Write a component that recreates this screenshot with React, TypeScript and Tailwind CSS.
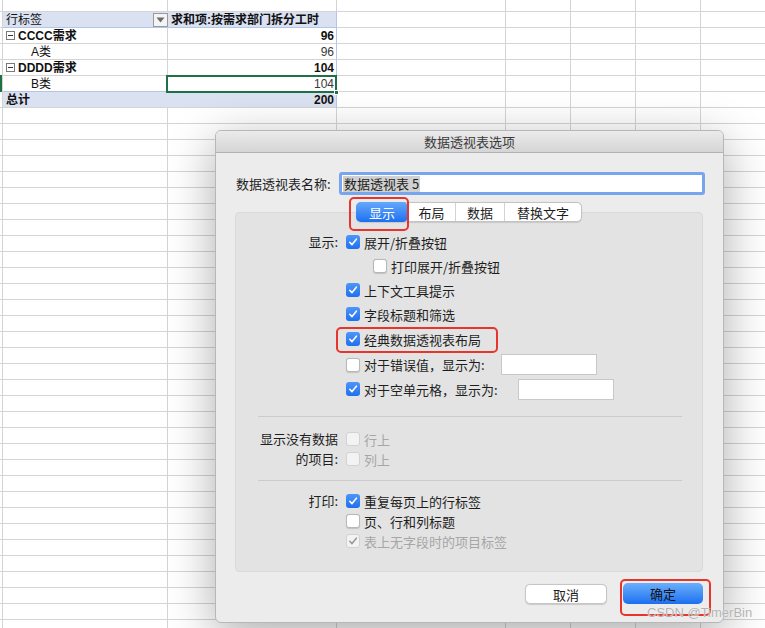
import React from 'react';

const colW = ['w-[3px]', 'w-[165px]', 'w-[169px]', 'w-[169px]', 'w-[65px]', 'w-[65px]', 'w-[65px]', 'w-[65px]'];

function EmptyCells({ from }: { from: number }) {
  return (
    <>
      {colW.slice(from).map((w, i) => (
        <div key={i} className={`${w} shrink-0 border-r border-b border-[#d4d4d4]`} />
      ))}
    </>
  );
}

function EmptyRow({ h = 'h-[16px]' }: { h?: string }) {
  return (
    <div className={`flex shrink-0 ${h}`}>
      <EmptyCells from={0} />
    </div>
  );
}

function Collapse() {
  return (
    <span className="w-[9px] h-[9px] border border-[#7a7a7a] bg-white flex items-center justify-center shrink-0">
      <span className="w-[5px] h-px bg-[#333]" />
    </span>
  );
}

function PivotRow({
  label,
  value,
  bold,
  indent,
  collapse,
  selected,
  lastBlue,
}: {
  label: string;
  value: string;
  bold?: boolean;
  indent?: boolean;
  collapse?: boolean;
  selected?: boolean;
  lastBlue?: boolean;
}) {
  const bb = lastBlue ? 'border-b-[#b4c6e7]' : 'border-b-[#d4d4d4]';
  return (
    <div className="flex shrink-0 h-[16px]">
      <div className={`w-[3px] shrink-0 border-r border-b border-[#d4d4d4] relative`}>
        {selected && <div className="absolute left-0 top-[-1px] w-[2px] h-[17px] bg-[#1e7145]" />}
      </div>
      <div
        className={`w-[165px] shrink-0 border-r border-b border-r-[#d4d4d4] ${bb} flex items-center text-[12px] leading-none text-[#111] ${
          bold ? 'font-bold' : ''
        } ${indent ? 'pl-[28px]' : 'pl-[3px]'}`}
      >
        {collapse && <Collapse />}
        <span className={collapse ? 'ml-[3px]' : ''}>{label}</span>
      </div>
      <div
        className={`w-[169px] shrink-0 border-r border-b border-r-[#b4c6e7] ${bb} flex items-center justify-end pr-[2px] text-[12px] leading-none relative ${
          bold ? 'font-bold text-[#111]' : 'text-[#3a3a3a]'
        }`}
      >
        {value}
        {selected && (
          <div className="absolute left-[-2px] top-[-1px] w-[171px] h-[18px] border-2 border-[#1e7145]">
            <div className="absolute right-[-4px] bottom-[-4px] w-[5px] h-[5px] bg-[#1e7145] border border-white" />
          </div>
        )}
      </div>
      <EmptyCells from={3} />
    </div>
  );
}

function Check({ color = 'white' }: { color?: string }) {
  return (
    <svg width="10" height="10" viewBox="0 0 10 10" fill="none">
      <path d="M1.8 5.3 L4 7.6 L8.4 2.2" stroke={color} strokeWidth="1.6" strokeLinecap="round" strokeLinejoin="round" />
    </svg>
  );
}

function Box({ state }: { state: 'on' | 'off' | 'disOff' | 'disOn' }) {
  if (state === 'on')
    return (
      <span className="w-[14px] h-[14px] shrink-0 rounded-[3px] bg-gradient-to-b from-[#4d95f8] to-[#1f70ef] flex items-center justify-center">
        <Check />
      </span>
    );
  if (state === 'off')
    return <span className="w-[14px] h-[14px] shrink-0 rounded-[3px] bg-white border border-[#b8b8b8] shadow-[0_0.5px_1px_rgba(0,0,0,0.15)]" />;
  if (state === 'disOn')
    return (
      <span className="w-[14px] h-[14px] shrink-0 rounded-[3px] bg-[#f3f3f3] border border-[#d2d2d2] flex items-center justify-center">
        <Check color="#9b9b9b" />
      </span>
    );
  return <span className="w-[14px] h-[14px] shrink-0 rounded-[3px] bg-[#f3f3f3] border border-[#d2d2d2]" />;
}

function CbRow({
  state,
  text,
  h = 'h-[24px]',
  indent,
  disabled,
  children,
}: {
  state: 'on' | 'off' | 'disOff' | 'disOn';
  text: string;
  h?: string;
  indent?: boolean;
  disabled?: boolean;
  children?: React.ReactNode;
}) {
  return (
    <div className={`flex items-center ${h} relative ${indent ? 'pl-[27px]' : ''}`}>
      <Box state={state} />
      <span className={`ml-[4px] text-[13px] leading-none whitespace-nowrap ${disabled ? 'text-[#a6a6a6]' : 'text-[#1e1e1e]'}`}>{text}</span>
      {children}
    </div>
  );
}

const redBox = 'absolute border-2 border-[#e8352c] rounded-[5px] pointer-events-none';

export default function App() {
  const filler = Array.from({ length: 34 });
  return (
    <div className="relative w-[765px] h-[628px] overflow-hidden bg-white font-['Liberation_Sans','Noto_Sans_CJK_SC',sans-serif]">
      {/* Spreadsheet grid */}
      <div className="flex flex-col">
        <EmptyRow h="h-[12px]" />
        {/* header row */}
        <div className="flex shrink-0 h-[16px]">
          <div className="w-[3px] shrink-0 border-r border-b border-[#d4d4d4]" />
          <div className="w-[165px] shrink-0 border-r border-b border-r-[#dae1f1] border-b-[#b4c6e7] bg-[#dae1f1] flex items-center justify-between pl-[3px] text-[12px] leading-none text-[#111]">
            <span>行标签</span>
            <span className="w-[15px] h-[14px] border border-[#9a9a9a] bg-[#f4f4f4] flex items-center justify-center mr-[-1px]">
              <svg width="9" height="6" viewBox="0 0 9 6">
                <path d="M0.5 0.5 H8.5 L4.5 5.5 Z" fill="#6b6b6b" />
              </svg>
            </span>
          </div>
          <div className="w-[169px] shrink-0 border-r border-b border-r-[#b4c6e7] border-b-[#b4c6e7] bg-[#dae1f1] flex items-center pl-[3px] text-[12px] leading-none font-bold text-[#111]">
            求和项:按需求部门拆分工时
          </div>
          <EmptyCells from={3} />
        </div>
        <PivotRow label="CCCC需求" value="96" bold collapse />
        <PivotRow label="A类" value="96" indent />
        <PivotRow label="DDDD需求" value="104" bold collapse />
        <PivotRow label="B类" value="104" indent selected lastBlue />
        {/* total row */}
        <div className="flex shrink-0 h-[16px]">
          <div className="w-[3px] shrink-0 border-r border-b border-[#d4d4d4]" />
          <div className="w-[165px] shrink-0 border-r border-b border-r-[#dae1f1] border-b-[#d4d4d4] bg-[#dae1f1] flex items-center pl-[3px] text-[12px] leading-none font-bold text-[#111]">
            总计
          </div>
          <div className="w-[169px] shrink-0 border-r border-b border-r-[#b4c6e7] border-b-[#d4d4d4] bg-[#dae1f1] flex items-center justify-end pr-[2px] text-[12px] leading-none font-bold text-[#111]">
            200
          </div>
          <EmptyCells from={3} />
        </div>
        {filler.map((_, i) => (
          <EmptyRow key={i} />
        ))}
      </div>

      {/* Dialog window */}
      <div className="absolute left-[215px] top-[130px] w-[509px] h-[493px] rounded-[6px] bg-[#ececec] border border-[#b7b7b7] shadow-[0_12px_48px_rgba(0,0,0,0.33)] flex flex-col overflow-hidden font-['Noto_Sans_CJK_SC',sans-serif]">
        <div className="h-[22px] shrink-0 border-b border-[#b3b3b3] bg-gradient-to-b from-[#ebebeb] to-[#d5d5d5] flex items-center justify-center text-[13px] leading-none text-[#3a3a3a]">
          数据透视表选项
        </div>
        <div className="flex flex-col pl-[19px] pr-[20px] pt-[19px]">
          {/* name row */}
          <div className="flex items-center h-[23px]">
            <span className="ml-[1px] text-[13px] leading-none text-[#1e1e1e]">数据透视表名称:</span>
            <div className="ml-auto mr-[-2px] w-[366px] h-[23px] rounded-[3px] border-[3px] border-[#77a5ee] bg-white flex items-center pl-[1px]">
              <span className="bg-[#d0d0d0] text-[13px] leading-[16px] text-[#1e1e1e] px-[1px]">数据透视表 5</span>
            </div>
          </div>

          {/* tabs */}
          <div className="mt-[7px] h-[20px] flex justify-center relative z-10">
            <div className="relative flex h-[20px] rounded-[5px] border border-[#c3c3c3] bg-white shadow-[0_0.5px_1px_rgba(0,0,0,0.12)] text-[13px] leading-none text-[#1e1e1e]">
              <div className="w-[52px] -my-px -ml-px rounded-[5px] bg-gradient-to-b from-[#64a8fa] to-[#1b6ff0] text-white flex items-center justify-center">显示</div>
              <div className="w-[48px] border-r border-[#d3d3d3] flex items-center justify-center">布局</div>
              <div className="w-[49px] border-r border-[#d3d3d3] flex items-center justify-center">数据</div>
              <div className="w-[76px] flex items-center justify-center">替换文字</div>
              <div className={`${redBox} left-[-8px] top-[-6px] w-[60px] h-[34px]`} />
            </div>
          </div>

          {/* panel */}
          <div className="-mt-[10px] h-[360px] rounded-[4px] border border-[#d9d9d9] bg-[#e3e3e3] flex flex-col pt-[17px]">
            {/* section 1 */}
            <div className="flex">
              <div className="w-[102px] shrink-0 text-right h-[24px] leading-[24px] text-[13px] text-[#1e1e1e]">显示:</div>
              <div className="ml-[8px] flex flex-col">
                <CbRow state="on" text="展开/折叠按钮" />
                <CbRow state="off" text="打印展开/折叠按钮" indent />
                <CbRow state="on" text="上下文工具提示" />
                <CbRow state="on" text="字段标题和筛选" />
                <CbRow state="on" text="经典数据透视表布局" h="h-[26px]">
                  <div className={`${redBox} left-[-10px] top-[1px] w-[162px] h-[26px]`} />
                </CbRow>
                <CbRow state="off" text="对于错误值，显示为:" h="h-[25px]">
                  <div className="ml-[16px] w-[96px] h-[21px] bg-white border border-[#c8c8c8]" />
                </CbRow>
                <CbRow state="on" text="对于空单元格，显示为:">
                  <div className="ml-[20px] w-[96px] h-[21px] bg-white border border-[#c8c8c8]" />
                </CbRow>
              </div>
            </div>

            <div className="mt-[15px] ml-[22px] mr-[20px] h-px bg-[#cbcbcb]" />

            {/* section 2 */}
            <div className="flex mt-[12px]">
              <div className="w-[102px] shrink-0 text-right leading-[20px] text-[13px] text-[#1e1e1e]">
                显示没有数据
                <br />
                的项目:
              </div>
              <div className="ml-[8px] flex flex-col">
                <CbRow state="disOff" text="行上" h="h-[20px]" disabled />
                <CbRow state="disOff" text="列上" h="h-[20px]" disabled />
              </div>
            </div>

            <div className="mt-[11px] ml-[22px] mr-[20px] h-px bg-[#cbcbcb]" />

            {/* section 3 */}
            <div className="flex mt-[10px]">
              <div className="w-[102px] shrink-0 text-right h-[20px] leading-[20px] text-[13px] text-[#1e1e1e]">打印:</div>
              <div className="ml-[8px] flex flex-col">
                <CbRow state="on" text="重复每页上的行标签" h="h-[20px]" />
                <CbRow state="off" text="页、行和列标题" h="h-[20px]" />
                <CbRow state="disOn" text="表上无字段时的项目标签" h="h-[20px]" disabled />
              </div>
            </div>
          </div>

          {/* buttons */}
          <div className="mt-[11px] flex justify-end gap-[16px]">
            <div className="mt-[1px] w-[82px] h-[20px] rounded-[5px] bg-white border border-[#c6c6c6] shadow-[0_0.5px_1px_rgba(0,0,0,0.15)] flex items-center justify-center text-[13px] leading-none text-[#1e1e1e]">
              取消
            </div>
            <div className="relative w-[80px] h-[21px] rounded-[5px] bg-gradient-to-b from-[#6aaefb] to-[#1a6ff0] flex items-center justify-center text-[13px] leading-none text-[#111]">
              确定
              <div className={`${redBox} left-[-3px] top-[-4px] w-[91px] h-[37px]`} />
            </div>
          </div>
        </div>
      </div>

      {/* watermark */}
      <div className="absolute left-[647px] top-[606px] text-[13px] leading-none text-[#b3b3b3] font-['Liberation_Sans',sans-serif] [text-shadow:0_0_1px_#ffffff]">
        CSDN @TimerBin
      </div>
    </div>
  );
}
